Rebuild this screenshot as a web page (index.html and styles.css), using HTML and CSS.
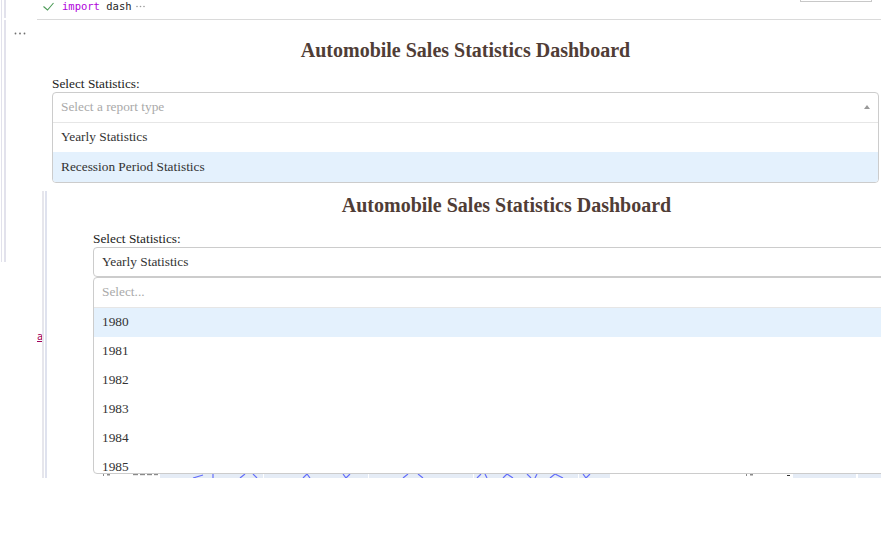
FILE: index.html
```html
<!DOCTYPE html>
<html lang="en">
<head>
<meta charset="utf-8">
<title>Automobile Sales Statistics Dashboard</title>
<link rel="stylesheet" href="styles.css">
</head>
<body>
<div class="page">
  <div class="gutter">
    <div class="gutter-outer">
      <div class="gutter-inner-top"></div>
      <div class="gutter-inner">
        <svg class="more" width="12" height="3" viewBox="0 0 12 3"><circle cx="1.5" cy="1.5" r="0.9"/><circle cx="6" cy="1.5" r="0.9"/><circle cx="10.5" cy="1.5" r="0.9"/></svg>
      </div>
    </div>
  </div>
  <div class="main">
    <div class="cell-head">
      <div class="code">
        <svg class="check" width="11" height="9" viewBox="0 0 11 9"><polyline points="0.5,4.5 4.5,8 10.5,1" fill="none" stroke="#4b9a56" stroke-width="1.1"/></svg>
        <span class="code-text"><span class="kw">import</span> <span class="id">dash</span></span>
        <svg class="dots" width="9" height="3" viewBox="0 0 9 3"><circle cx="1" cy="1.5" r="0.8"/><circle cx="4.5" cy="1.5" r="0.8"/><circle cx="8" cy="1.5" r="0.8"/></svg>
      </div>
      <div class="toolbar-box"></div>
    </div>

    <div class="app app-first">
      <h1 class="title">Automobile Sales Statistics Dashboard</h1>
      <div class="label">Select Statistics:</div>
      <div class="dd">
        <div class="dd-control"><span class="placeholder">Select a report type</span><span class="arrow-up"></span></div>
        <div class="dd-menu">
          <div class="dd-option">Yearly Statistics</div>
          <div class="dd-option is-focused">Recession Period Statistics</div>
        </div>
      </div>
    </div>

    <div class="row2">
      <div class="a-col"><span class="link-a">a</span></div>
      <div class="frame-outer">
        <div class="frame-inner">
          <div class="app app-second">
            <h1 class="title">Automobile Sales Statistics Dashboard</h1>
            <div class="label">Select Statistics:</div>
            <div class="dd dd-single">
              <div class="dd-control"><span class="value">Yearly Statistics</span></div>
            </div>
            <div class="dd dd-years">
              <div class="dd-control"><span class="placeholder">Select...</span></div>
              <div class="dd-menu menu-years">
                <div class="dd-option is-focused">1980</div>
                <div class="dd-option">1981</div>
                <div class="dd-option">1982</div>
                <div class="dd-option">1983</div>
                <div class="dd-option">1984</div>
                <div class="dd-option">1985</div>
              </div>
            </div>
            <svg class="chart-strip" width="827" height="4" viewBox="0 0 827 4">
              <g fill="#8a8a8a">
                <rect x="10" y="0" width="1" height="2"/>
                <rect x="14" y="0" width="3" height="1.5"/>
                <rect x="40" y="0" width="5" height="1.2"/>
                <rect x="47" y="0" width="5" height="1.2"/>
                <rect x="54" y="0" width="5" height="1.2"/>
                <rect x="61" y="0" width="4" height="1.2"/>
                <rect x="653" y="0" width="1" height="2"/>
                <rect x="657" y="0" width="3" height="1.5"/>
              </g>
              <rect x="67" y="0" width="450" height="4" fill="#e5ecf6"/>
              <g fill="#ffffff">
                <rect x="170" y="0" width="1" height="4"/>
                <rect x="275" y="0" width="1" height="4"/>
                <rect x="380" y="0" width="1" height="4"/>
                <rect x="485" y="0" width="1" height="4"/>
              </g>
              <g stroke="#636efa" stroke-width="1.2" fill="none">
                <path d="M100 4 L110 1"/>
                <path d="M120 0 L120 4"/>
                <path d="M147 4 L152 0 M160 0 L164 4"/>
                <path d="M210 4 L214 0 L217 4"/>
                <path d="M250 0 L253 4 L257 0"/>
                <path d="M310 4 L315 0 M325 0 L330 4"/>
                <path d="M384 4 L388 0 M392 0 L394 4"/>
                <path d="M410 4 L414 0 L420 4"/>
                <path d="M434 0 L438 4 M442 4 L444 0"/>
                <path d="M457 4 L462 0 L470 4"/>
                <path d="M490 0 L493 4 L497 0"/>
              </g>
              <rect x="694" y="1" width="3" height="1" fill="#333"/>
              <rect x="700" y="0" width="63" height="4" fill="#e5ecf6"/>
              <rect x="765" y="0" width="62" height="4" fill="#e5ecf6"/>
            </svg>
          </div>
        </div>
      </div>
    </div>
  </div>
</div>
</body>
</html>
```
FILE: styles.css
```css
* { box-sizing: border-box; }
html, body { margin: 0; padding: 0; }
body {
  width: 881px;
  height: 546px;
  overflow: hidden;
  background: #ffffff;
  font-family: "Liberation Serif", "Times New Roman", serif;
  color: #333333;
}
.page {
  display: flex;
  width: 881px;
  height: 546px;
  overflow: hidden;
}

/* notebook gutter */
.gutter { width: 37px; flex: none; }
.gutter-outer {
  margin-left: 1px;
  height: 262px;
  border-left: 1px solid #e2e2ec;
  padding-left: 2px;
}
.gutter-inner-top { height: 18px; border-left: 2px solid #e2e2ec; }
.gutter-inner {
  margin-top: 2px;
  height: 242px;
  border-left: 2px solid #e2e2ec;
  padding: 12px 0 0 8px;
}
.more { display: block; fill: #6f6f6f; }

/* main column */
.main { flex: 1; min-width: 0; }
.cell-head {
  height: 20px;
  border-bottom: 1px solid #dadada;
  display: flex;
  justify-content: space-between;
  align-items: flex-start;
}
.code {
  display: flex;
  align-items: center;
  height: 12px;
  padding-left: 6px;
  font-family: "DejaVu Sans Mono", "Liberation Mono", monospace;
  font-size: 10.5px;
  line-height: 12px;
}
.code-text { white-space: pre; }
.check { display: block; margin-right: 8px; }
.kw { color: #af00db; }
.id { color: #1f1f1f; }
.dots { display: block; margin-left: 4px; fill: #9a9a9a; }
.toolbar-box {
  width: 72px;
  height: 2px;
  border: 1px solid #c8c8c8;
  border-top: none;
  margin-right: 9px;
}

/* dash app */
.app-first { width: 842px; padding: 19px 0 0 15px; }
.app-second { width: 873px; padding: 3px 0 0 46px; }
.title {
  margin: 0 0 14px;
  font-size: 20px;
  line-height: 23px;
  font-weight: bold;
  text-align: center;
  color: #503d36;
}
.label { font-size: 13.33px; line-height: 16px; color: #222222; }

.dd {
  border: 1px solid #cccccc;
  border-radius: 4px;
  background: #ffffff;
  font-size: 13.33px;
  overflow: hidden;
}
.dd-control {
  height: 28.5px;
  display: flex;
  align-items: center;
  justify-content: space-between;
  padding: 0 8px;
}
.dd-single .dd-control { height: 28px; }
.placeholder { color: #aaaaaa; }
.value { color: #333333; }
.arrow-up {
  width: 0;
  height: 0;
  border-left: 3.5px solid transparent;
  border-right: 3.5px solid transparent;
  border-bottom: 4px solid #999999;
}
.dd-menu { border-top: 1px solid #e6e6e6; }
.dd-option {
  height: 29.5px;
  display: flex;
  align-items: center;
  padding: 0 8px;
  color: #333333;
}
.dd-option.is-focused { background: #e4f1fd; }
.menu-years { height: 166px; overflow: hidden; }
.menu-years .dd-option { height: 29px; flex: none; }

.chart-strip { display: block; }

/* second output row */
.row2 { display: flex; margin-top: 8.5px; }
.a-col { width: 5px; flex: none; padding-top: 140px; }
.link-a {
  display: block;
  width: 5px;
  overflow: hidden;
  font-family: "DejaVu Sans Mono", monospace;
  font-size: 10px;
  line-height: 12px;
  color: #a1005b;
  text-decoration: underline;
}
.frame-outer {
  flex: 1;
  min-width: 0;
  height: 287px;
  border-left: 2px solid #e6e6ec;
  padding-left: 1px;
}
.frame-inner {
  height: 100%;
  border-left: 2px solid #dfe2ee;
  overflow: hidden;
}
```
